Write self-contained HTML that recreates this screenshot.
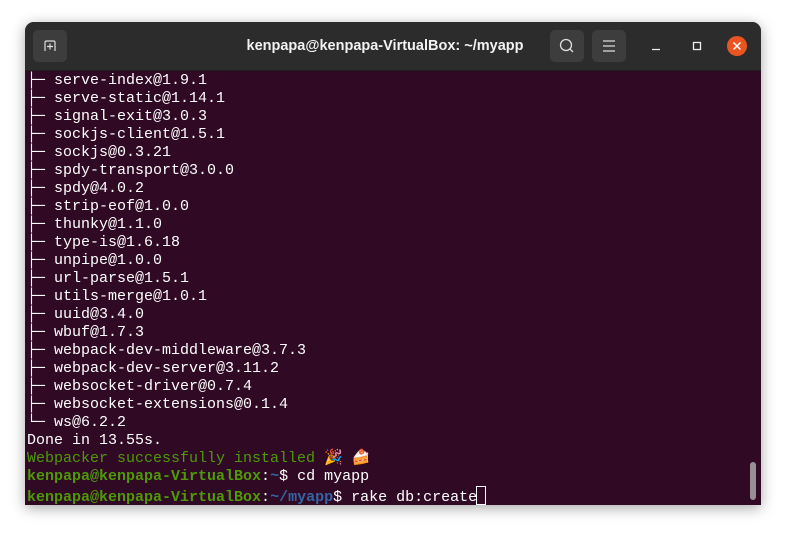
<!DOCTYPE html>
<html><head><meta charset="utf-8"><style>
html,body{margin:0;padding:0;width:786px;height:533px;background:#ffffff;overflow:hidden}
.win{position:absolute;left:25px;top:22px;width:736px;height:483px;background:#300a24;border-radius:9px 9px 0 0;box-shadow:0 3px 14px rgba(0,0,0,.35);overflow:hidden}
.tb{position:absolute;left:0;top:0;width:736px;height:48px;background:#2c2c2c;border-bottom:1px solid #1f1f1f}
.btn{position:absolute;top:8px;width:34px;height:32px;background:#3d3d3d;border-radius:5px}
.title{position:absolute;left:-8px;width:736px;top:16px;text-align:center;color:#f2f2f2;font:bold 14.5px "Liberation Sans",sans-serif;box-sizing:border-box}
.term{position:absolute;left:2px;top:50px;font:15px/18px "Liberation Mono",monospace;color:#ffffff;white-space:pre}
.term div{height:18px}
.g{color:#4e9a06}.gb{color:#4e9a06;font-weight:bold}.bb{color:#3465a4;font-weight:bold}
.cur{display:inline-block;width:8px;height:17px;border:1px solid #fff;vertical-align:-4px;margin-left:-1px}
.sb{position:absolute;left:725px;top:440px;width:6px;height:38px;background:#9a8e96;border-radius:3px}
</style></head><body>
<div class="win">
 <div class="tb">
  <div class="btn" style="left:8px"><svg width="34" height="32"><path d="M12 21V12.5Q12 11 13.5 11H20.5Q22 11 22 12.5V21" fill="none" stroke="#ddd" stroke-width="1.2"/><path d="M17 13.5v6M14 16.5h6" stroke="#ddd" stroke-width="1.2"/></svg></div>
  <div class="title">kenpapa@kenpapa-VirtualBox: ~/myapp</div>
  <div class="btn" style="left:525px"><svg width="34" height="32"><circle cx="16" cy="15" r="5.5" fill="none" stroke="#ddd" stroke-width="1.3"/><path d="M20 19l3 3" stroke="#ddd" stroke-width="1.3"/></svg></div>
  <div class="btn" style="left:567px"><svg width="34" height="32"><path d="M11 11h12M11 16h12M11 21h12" stroke="#ddd" stroke-width="1.2"/></svg></div>
  <svg style="position:absolute;left:620px;top:14px" width="110" height="22"><path d="M7 13.5h8" stroke="#eee" stroke-width="1.3"/><rect x="48.5" y="6.5" width="7" height="7" fill="none" stroke="#eee" stroke-width="1.3"/><circle cx="92" cy="10" r="10" fill="#e95420"/><path d="M88.5 6.5l7 7M95.5 6.5l-7 7" stroke="#fff" stroke-width="1.5"/></svg>
 </div>
 <div class="term"><div>├─ serve-index@1.9.1</div><div>├─ serve-static@1.14.1</div><div>├─ signal-exit@3.0.3</div><div>├─ sockjs-client@1.5.1</div><div>├─ sockjs@0.3.21</div><div>├─ spdy-transport@3.0.0</div><div>├─ spdy@4.0.2</div><div>├─ strip-eof@1.0.0</div><div>├─ thunky@1.1.0</div><div>├─ type-is@1.6.18</div><div>├─ unpipe@1.0.0</div><div>├─ url-parse@1.5.1</div><div>├─ utils-merge@1.0.1</div><div>├─ uuid@3.4.0</div><div>├─ wbuf@1.7.3</div><div>├─ webpack-dev-middleware@3.7.3</div><div>├─ webpack-dev-server@3.11.2</div><div>├─ websocket-driver@0.7.4</div><div>├─ websocket-extensions@0.1.4</div><div>└─ ws@6.2.2</div><div>Done in 13.55s.</div><div><span class="g">Webpacker successfully installed </span>🎉 🍰</div><div><span class="gb">kenpapa@kenpapa-VirtualBox</span>:<span class="bb">~</span>$ cd myapp</div><div><span class="gb">kenpapa@kenpapa-VirtualBox</span>:<span class="bb">~/myapp</span>$ rake db:create<span class="cur"></span></div></div>
 <div class="sb"></div>
</div>
</body></html>
